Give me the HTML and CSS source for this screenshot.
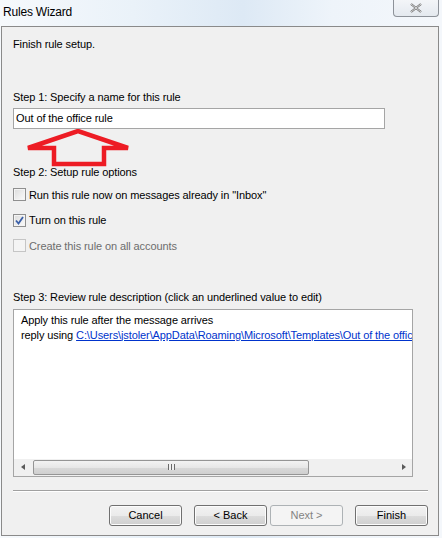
FILE: index.html
```html
<!DOCTYPE html>
<html lang="en">
<head>
    <meta charset="UTF-8">
    <title>Rules Wizard</title>
    <link rel="stylesheet" href="styles.css">
</head>
<body>
    <div class="window">
        <div class="titlebar">
            <span class="title">Rules Wizard</span>
            <div class="close-btn">
                <svg width="14" height="10" viewBox="0 0 14 10">
                    <path d="M2 1 L12 9 M12 1 L2 9" stroke="#6a6a6a" stroke-width="2.2" fill="none"/>
                    <path d="M2 1 L12 9 M12 1 L2 9" stroke="#f4f4f4" stroke-width="0.8" fill="none"/>
                </svg>
            </div>
        </div>

        <div class="panel">
            <p class="intro">Finish rule setup.</p>

            <p class="step step-1">Step 1: Specify a name for this rule</p>
            <div class="name-input">Out of the office rule</div>

            <!-- flecha roja de la captura -->
            <svg class="arrow" width="110" height="42" viewBox="0 0 110 42">
                <path d="M2 19 L52 2 L102 19 L78 19 L78 35 L28 35 L28 19 Z"
                      fill="none" stroke="#ed1c24" stroke-width="4.5" stroke-linejoin="miter"/>
            </svg>

            <p class="step step-2">Step 2: Setup rule options</p>
            <div class="options">
                <label class="option"><span class="checkbox"></span>Run this rule now on messages already in "Inbox"</label>
                <label class="option"><span class="checkbox checked">
                    <svg width="9" height="9" viewBox="0 0 9 9"><path d="M1 4.5 L3.5 7.5 L8 1" stroke="#3a5fa8" stroke-width="1.8" fill="none"/></svg>
                </span>Turn on this rule</label>
                <label class="option disabled"><span class="checkbox"></span>Create this rule on all accounts</label>
            </div>

            <p class="step step-3">Step 3: Review rule description (click an underlined value to edit)</p>
            <div class="description">
                <div class="desc-text">
                    <div>Apply this rule after the message arrives</div>
                    <div>reply using <a href="#">C:\Users\jstoler\AppData\Roaming\Microsoft\Templates\Out of the office.oft</a></div>
                </div>
                <div class="hscroll">
                    <span class="scroll-arrow left"></span>
                    <div class="track">
                        <div class="thumb"><span class="grip"></span></div>
                    </div>
                    <span class="scroll-arrow right"></span>
                </div>
            </div>

            <div class="separator"></div>

            <div class="buttons">
                <button class="btn">Cancel</button>
                <button class="btn btn-back">&lt; Back</button>
                <button class="btn btn-next" disabled>Next &gt;</button>
                <button class="btn btn-finish">Finish</button>
            </div>
        </div>
    </div>
</body>
</html>
```

FILE: styles.css
```css
body {
    margin: 0;
    font-family: 'Liberation Sans', Arial, sans-serif;
    font-size: 11px;
    letter-spacing: -0.1px;
    color: #000;
    background: linear-gradient(90deg, #f6f9fc 0%, #eaf2f9 30%, #dde9f5 55%, #eef4fa 75%, #f4f7fb 100%);
}

.window {
    width: 442px;
    height: 538px;
    overflow: hidden;
}

.titlebar {
    position: relative;
    height: 26px;
}
.title {
    display: block;
    padding: 5px 0 0 3px;
    font-size: 12px;
    letter-spacing: -0.2px;
}
.close-btn {
    position: absolute;
    top: 0;
    right: 3px;
    width: 46px;
    height: 17px;
    box-sizing: border-box;
    border: 1px solid #8d9299;
    border-top: none;
    border-radius: 0 0 4px 4px;
    background: linear-gradient(#f3f5f8, #e4e9ef);
    display: flex;
    justify-content: center;
    align-items: center;
}

.panel {
    position: relative;
    margin: 0 3px 0 1px;
    height: 508px;
    border: 1px solid #8a8a8a;
    background-color: #f0f0f0;
    padding: 0 11px;
}

p {
    margin: 0;
    line-height: 15px;
}
.intro {
    padding-top: 10px;
}
.step-1 {
    margin-top: 38px;
}
.name-input {
    margin-top: 3px;
    width: 368px;
    height: 19px;
    border: 1px solid #a5a5a5;
    background: #fff;
    line-height: 19px;
    padding-left: 2px;
}
.arrow {
    position: absolute;
    left: 24px;
    top: 102px;
}
.step-2 {
    margin-top: 36px;
}

.options {
    margin-top: 2px;
}
.option {
    display: flex;
    align-items: center;
    height: 25.5px;
}
.checkbox {
    width: 13px;
    height: 13px;
    box-sizing: border-box;
    border: 1px solid #8f8f8f;
    background: linear-gradient(135deg, #dcdcdc, #fbfbfb);
    box-shadow: inset 0 0 0 1px #f4f4f4;
    margin-right: 3px;
    display: flex;
    justify-content: center;
    align-items: center;
}
.disabled {
    color: #6d6d6d;
}
.disabled .checkbox {
    border-color: #c5c5c5;
    background: #f4f4f4;
}

.step-3 {
    margin-top: 31px;
}
.description {
    margin-top: 4px;
    width: 398px;
    height: 166px;
    border: 1px solid #a5a5a5;
    background: #fff;
    display: flex;
    flex-direction: column;
}
.desc-text {
    flex: 1;
    overflow: hidden;
    white-space: nowrap;
    padding: 3px 0 0 7px;
    line-height: 15px;
}
.desc-text a {
    color: #0033cc;
}

.hscroll {
    height: 17px;
    display: flex;
    align-items: center;
    background: #f0f0f0;
}
.scroll-arrow {
    width: 17px;
    height: 17px;
    position: relative;
}
.scroll-arrow::after {
    content: "";
    position: absolute;
    top: 5px;
    border-top: 3.5px solid transparent;
    border-bottom: 3.5px solid transparent;
}
.scroll-arrow.left::after {
    left: 7px;
    border-right: 4px solid #5a5a5a;
}
.scroll-arrow.right::after {
    left: 7px;
    border-left: 4px solid #5a5a5a;
}
.track {
    flex: 1;
    height: 17px;
    display: flex;
    align-items: center;
    padding-left: 2px;
}
.thumb {
    width: 276px;
    height: 15px;
    box-sizing: border-box;
    border: 1px solid #959595;
    border-radius: 2px;
    background: linear-gradient(#f3f3f3, #e7e7e7 50%, #d9d9d9 51%, #cfcfcf);
    display: flex;
    justify-content: center;
    align-items: center;
}
.grip {
    width: 7px;
    height: 6px;
    background: repeating-linear-gradient(90deg, #6a6a6a 0 1px, #f0f0f0 1px 3px);
}

.separator {
    margin-top: 13px;
    width: 415px;
    border-top: 1px solid #a0a0a0;
    border-bottom: 1px solid #ffffff;
}

.buttons {
    margin-top: 13px;
    display: flex;
    justify-content: flex-end;
    width: 415px;
}
.btn {
    width: 73px;
    height: 21px;
    margin-left: 12px;
    font-family: 'Liberation Sans', Arial, sans-serif;
    font-size: 11px;
    color: #000;
    border: 1px solid #707070;
    border-radius: 3px;
    background: linear-gradient(#f2f2f2, #ebebeb 50%, #dddddd 51%, #cfcfcf);
    box-shadow: inset 0 0 0 1px #fcfcfc;
    padding: 0;
}
.btn-next {
    margin-left: 3px;
    color: #838383;
    border-color: #adb2b5;
    background: #f4f4f4;
    box-shadow: none;
}
```
